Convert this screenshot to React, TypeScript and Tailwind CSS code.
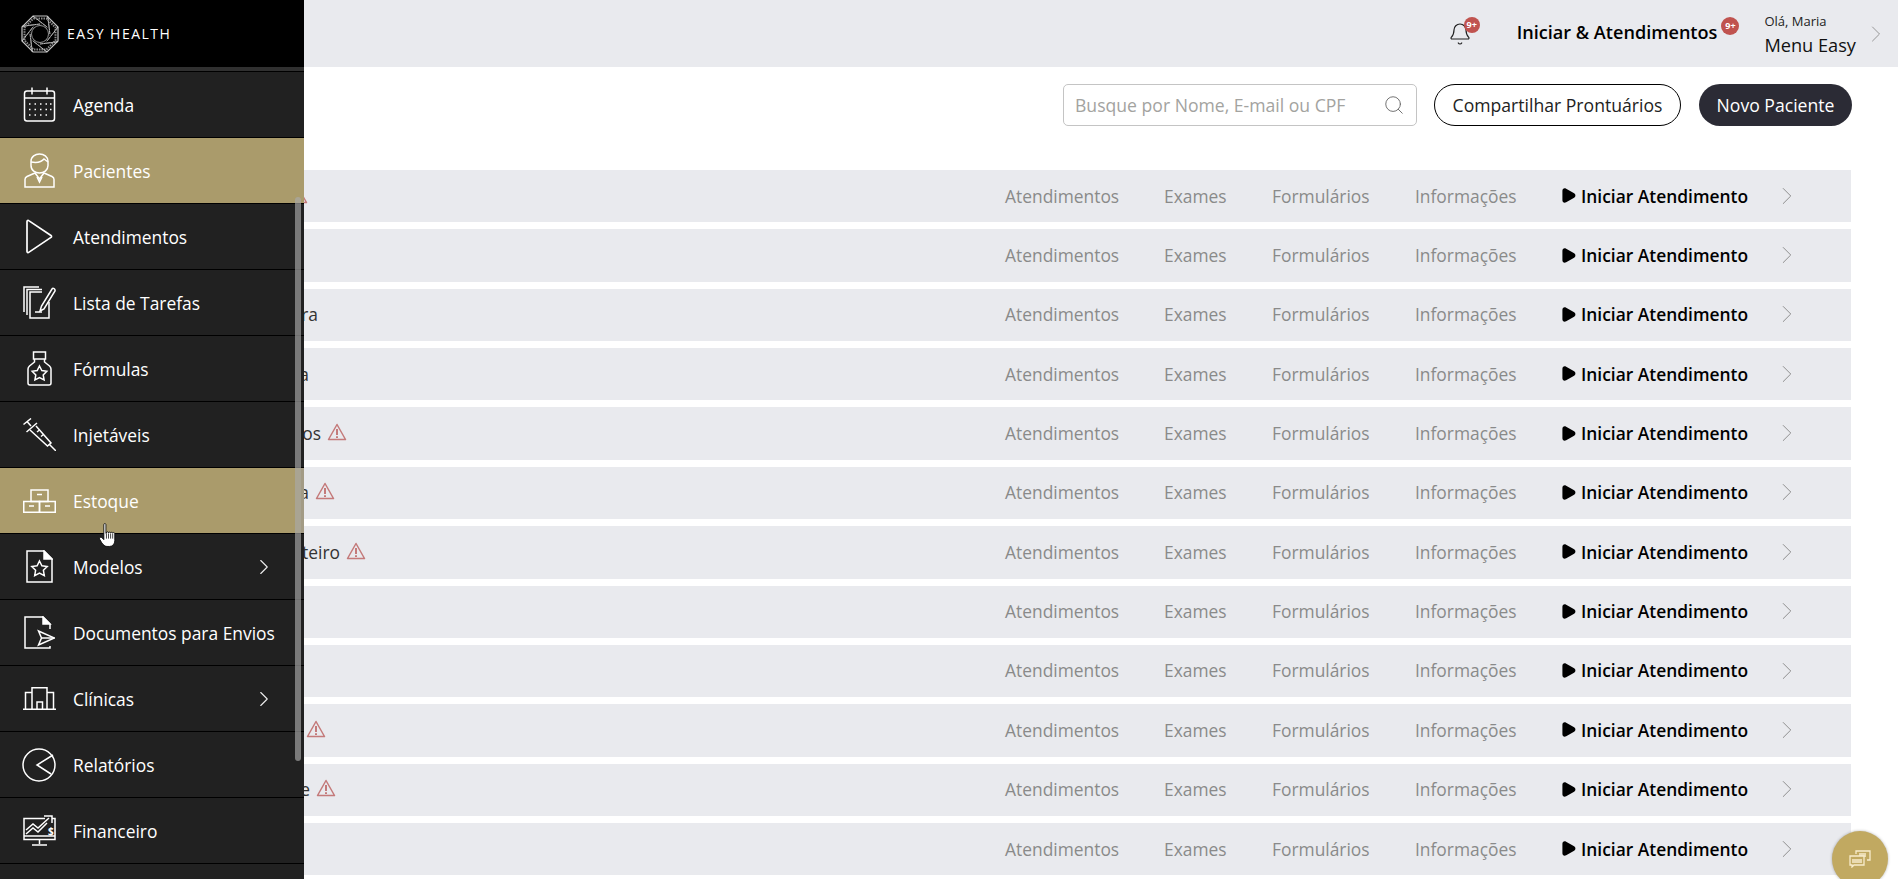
import React from "react";
import { Search, ChevronRight, Bell } from "lucide-react";

const font = { fontFamily: '"Open Sans", sans-serif' };

function CalendarIcon() {
  return (
    <svg width="33" height="35" viewBox="0 0 33 35" fill="none" stroke="currentColor" strokeWidth="1.5">
      <rect x="1.500" y="4" width="30" height="30" rx="2.500" />
      <path d="M1.500 11h30M9 .5v7M24 .5v7" />
      <path d="M6 17h1.500M11.500 17h1.500M17 17h1.500M22.500 17h1.500M27 17h1.500M6 22.500h1.500M11.500 22.500h1.500M17 22.500h1.500M22.500 22.500h1.500M27 22.500h1.500M6 28h1.500M11.500 28h1.500M17 28h1.500M22.500 28h1.500" strokeWidth="1.500" />
    </svg>
  );
}
function PersonIcon() {
  return (
    <svg width="31" height="35" viewBox="0 0 31 35" fill="none" stroke="currentColor" strokeWidth="1.5">
      <path d="M7 8.500c0-10 17-10 17 0v4c0 10-17 10-17 0z" />
      <path d="M7 9c6 1 11-.5 13-3l4 3" />
      <path d="M11 20l-8 3.500c-1.500.7-2 1.700-2 3V34h29v-7.500c0-1.300-.5-2.300-2-3L20 20l-4.500 6z" />
      <path d="M13 24l2.500 5 2.500-5" />
    </svg>
  );
}
function PlayIcon() {
  return (
    <svg width="28" height="35" viewBox="0 0 28 35" fill="none" stroke="currentColor" strokeWidth="1.7">
      <path d="M2 2.500c0-1 1-1.400 1.700-.9L26 16.500c.7.500.7 1.400 0 1.900L3.700 33.400c-.7.500-1.700.1-1.700-.9z" strokeLinejoin="round" />
    </svg>
  );
}
function TasksIcon() {
  return (
    <svg width="33" height="33" viewBox="0 0 33 33" fill="none" stroke="currentColor" strokeWidth="1.5">
      <path d="M1 26V1h15M4 29V3.500h15" />
      <path d="M19 6H7v26h19V16" />
      <path d="M17 25l1.500-5L29 3c1-1.500 3.500 0 3 2L21 23z" />
      <path d="M12 26h7" />
    </svg>
  );
}
function BottleIcon() {
  return (
    <svg width="25" height="35" viewBox="0 0 25 35" fill="none" stroke="currentColor" strokeWidth="1.5">
      <rect x="6.500" y="1" width="12" height="7" />
      <path d="M7.500 8v3l-5 4c-1 1-1.500 1.500-1.500 3v14c0 1.200.8 2 2 2h19c1.200 0 2-.8 2-2V18c0-1.500-.5-2-1.500-3l-5-4V8" />
      <path d="M12.500 15l2.300 4.600 5 .7-3.600 3.600.9 5-4.600-2.400-4.600 2.400.9-5-3.600-3.600 5-.7z" />
    </svg>
  );
}
function SyringeIcon() {
  return (
    <svg width="33" height="33" viewBox="0 0 33 33" fill="none" stroke="currentColor" strokeWidth="1.5">
      <path d="M.5 6.500L8 .5M4 3.500L8 8M3.500 14L14 5" />
      <path d="M13 8l15 17-3.500 3L7 12" />
      <path d="M26 26l7 7" />
      <path d="M14 14l2.500-2M18 18.500l2.500-2" />
    </svg>
  );
}
function BoxesIcon() {
  return (
    <svg width="33" height="24" viewBox="0 0 33 24" fill="none" stroke="currentColor" strokeWidth="1.5">
      <rect x="8" y="1" width="17" height="11.500" />
      <rect x=".75" y="12.500" width="15.750" height="10.750" />
      <rect x="16.500" y="12.500" width="15.750" height="10.750" />
      <path d="M14 5.500h5M6 17h5M22 17h5" />
    </svg>
  );
}
function StarDocIcon() {
  return (
    <svg width="27" height="33" viewBox="0 0 27 33" fill="none" stroke="currentColor" strokeWidth="1.5">
      <path d="M1 1h17l8 8v23H1z" />
      <path d="M18 1v8h8z" fill="currentColor" />
      <path d="M13.500 11l2.400 4.800 5.300.8-3.800 3.700.9 5.300-4.800-2.500-4.800 2.500.9-5.300-3.800-3.700 5.300-.8z" />
    </svg>
  );
}
function DocSendIcon() {
  return (
    <svg width="31" height="33" viewBox="0 0 31 33" fill="none" stroke="currentColor" strokeWidth="1.5">
      <path d="M26 13V8l-7-7H1v31h25v-2" />
      <path d="M19 1v7h7z" fill="currentColor" />
      <path d="M14.500 15l16 7-16 7 3-7z" />
      <path d="M17.500 22h13" />
    </svg>
  );
}
function ClinicIcon() {
  return (
    <svg width="33" height="23" viewBox="0 0 33 23" fill="none" stroke="currentColor" strokeWidth="1.5">
      <path d="M0 22.250h33M2.500 22V5.500H9M30.500 22V5.500H24" />
      <path d="M9 22V.75h15V22" />
      <path d="M14 22v-7h5.500v7" />
    </svg>
  );
}
function PieIcon() {
  return (
    <svg width="34" height="34" viewBox="0 0 34 34" fill="none" stroke="currentColor" strokeWidth="1.5">
      <circle cx="17" cy="17" r="16" />
      <path d="M31 7L15 17l14 9" />
    </svg>
  );
}
function FinanceIcon() {
  return (
    <svg width="33" height="31" viewBox="0 0 33 31" fill="none" stroke="currentColor" strokeWidth="1.5">
      <path d="M22 3.500H1v21h31v-21h-3" />
      <path d="M1 21h31M16.500 25v4M9 30h15" />
      <path d="M3 15l7-6 5 4L26 3M21 1h8v7" />
      <path d="M3 19l7-6 5 4 9-9" />
      <text x="25" y="19.500" fontSize="10" fontWeight="700" stroke="none" fill="currentColor" fontFamily="Open Sans">$</text>
    </svg>
  );
}
function LogoIcon() {
  const blades = [0, 45, 90, 135, 180, 225, 270, 315];
  return (
    <svg width="38" height="38" viewBox="0 0 38 38" fill="none">
      <path d="M12 1h14l11 11v14L26 37H12L1 26V12z" stroke="#c4c4c4" strokeWidth="1.200" />
      <path d="M12.500 3.500h13l9 9v13l-9 9h-13l-9-9v-13z" stroke="#8c8c8c" strokeWidth="2" strokeDasharray="1.500 1" />
      {blades.map((a) => (
        <g key={a} transform={"rotate(" + a + " 19 19)"}>
          <path d="M12 1L26 12" stroke="#d6d6d6" strokeWidth="1" />
          <path d="M15 3L27 13" stroke="#7c7c7c" strokeWidth="1" strokeDasharray="1.500 1" />
        </g>
      ))}
      <circle cx="19" cy="19" r="8.500" fill="#000" stroke="#b8b8b8" strokeWidth="0.800" />
    </svg>
  );
}
function Warn() {
  return (
    <svg width="20" height="18" viewBox="0 0 20 18" fill="none" className="shrink-0 -translate-y-px text-[#c47a7a]" stroke="currentColor" strokeWidth="1.500">
      <path d="M10 1.500L18.500 16.500H1.500z" strokeLinejoin="round" />
      <path d="M10 6v6M10 13.200v1.800" strokeWidth="2" />
    </svg>
  );
}
function BubbleIcon() {
  return (
    <svg width="22" height="18" viewBox="0 0 22 18" fill="none" stroke="#f8eccb" strokeWidth="1.300">
      <path d="M7 4V1h14v9h-3" />
      <path d="M10 4h7M10 6h7" />
      <path d="M1 6h14v9H5l-2 2v-2H1z" fill="#c1a961" />
      <path d="M3 10h10M3 12h10" />
    </svg>
  );
}
function HandCursor() {
  return (
    <svg width="20" height="25" viewBox="0 0 18 24" className="absolute left-[98px] top-[523px] z-30">
      <path
        d="M5 1.500c0-1.300 2-1.300 2 0V10l.5-.5c0-1.500 2-1.500 2 0 0-1 2-1 2 0 0-.8 2-.8 2 0 0-.5 2-.5 2 .5V17c0 3-2 5.500-5 5.500H8C6 22.500 4.500 21 3 19L1 15.500c-.8-1.400.8-2.500 2-1.500l2 2z"
        fill="#fff"
        stroke="#000"
        strokeWidth="0.800"
      />
      <path d="M7.500 10v5M9.500 10v5M11.500 10v5M13.500 10v5" stroke="#000" strokeWidth="0.700" />
    </svg>
  );
}

const menu = [
  { label: "Agenda", icon: <CalendarIcon /> },
  { label: "Pacientes", icon: <PersonIcon />, active: true },
  { label: "Atendimentos", icon: <PlayIcon /> },
  { label: "Lista de Tarefas", icon: <TasksIcon /> },
  { label: "Fórmulas", icon: <BottleIcon /> },
  { label: "Injetáveis", icon: <SyringeIcon /> },
  { label: "Estoque", icon: <BoxesIcon />, active: true, strip: true },
  { label: "Modelos", icon: <StarDocIcon />, arrow: true },
  { label: "Documentos para Envios", icon: <DocSendIcon /> },
  { label: "Clínicas", icon: <ClinicIcon />, arrow: true },
  { label: "Relatórios", icon: <PieIcon /> },
  { label: "Financeiro", icon: <FinanceIcon /> },
];

const rows = [
  { name: "", w: "w-[282px]", warn: true },
  { name: "", w: "w-[300px]" },
  { name: "ra", w: "w-[318px]" },
  { name: "a", w: "w-[309px]" },
  { name: "os", w: "w-[321px]", warn: true },
  { name: "a", w: "w-[309px]", warn: true },
  { name: "teiro", w: "w-[340px]", warn: true },
  { name: "", w: "w-[300px]" },
  { name: "", w: "w-[300px]" },
  { name: "", w: "w-[300px]", warn: true },
  { name: "e", w: "w-[310px]", warn: true },
  { name: "", w: "w-[300px]" },
];

function Sidebar() {
  return (
    <aside className="absolute left-0 top-0 z-10 flex h-[879px] w-[304px] flex-col overflow-hidden bg-[#212121] text-white">
      <div className="flex h-[67px] shrink-0 items-center gap-[8px] bg-black pl-[21px]">
        <LogoIcon />
        <span className="text-[14px] tracking-[0.105em] text-white">EASY HEALTH</span>
      </div>
      <div className="h-[4px] shrink-0 bg-[#303030]" />
      <div className="h-px shrink-0 bg-black" />
      <nav className="flex flex-col">
        {menu.map((m) => (
          <div
            key={m.label}
            className={
              m.active
                ? "relative flex h-[66px] shrink-0 items-center border-b border-black bg-[#aa9b6b]"
                : "relative flex h-[66px] shrink-0 items-center border-b border-black"
            }
          >
            <div className="flex w-[73px] shrink-0 justify-center pl-[5px]">{m.icon}</div>
            <span className="translate-y-px text-[17.4px]">{m.label}</span>
            {m.arrow && <ChevronRight className="ml-auto mr-[27px] text-[#eeeeee]" size={26} strokeWidth={1} />}
            {m.strip && <div className="absolute right-0 top-0 h-full w-[3px] bg-[#a39b85]" />}
          </div>
        ))}
      </nav>
      <div className="absolute left-[295px] top-[197px] h-[564px] w-[6px] rounded-full bg-[#a8a8a8]/[0.66]" />
    </aside>
  );
}

function Row({ r }: { r: (typeof rows)[number] }) {
  return (
    <div className="mb-[7px] flex h-[52.36px] w-[1851px] shrink-0 items-center bg-[#e9eaee] pb-[1px] text-[17.4px]">
      <div className={r.w + " shrink-0 text-right text-[#333333]"}>{r.name}</div>
      {r.warn && <div className="ml-[6px]"><Warn /></div>}
      <div className="ml-auto flex items-center text-[#8a8a8a]">
        <span className="w-[159px]">Atendimentos</span>
        <span className="w-[108px]">Exames</span>
        <span className="w-[143px]">Formulários</span>
        <span className="w-[146px]">Informações</span>
        <svg width="15" height="15" viewBox="0 0 15 16" className="mr-[5px] text-black" fill="currentColor">
          <path d="M1 3C1 .6 3 -.3 5 .8l8.500 4.800c1.800 1 1.800 3.800 0 4.800L5 15.200C3 16.300 1 15.400 1 13z" />
        </svg>
        <span className="w-[191px] font-semibold text-black">Iniciar Atendimento</span>
        <ChevronRight className="mr-[49px] text-[#8f8f8f]" size={30} strokeWidth={0.8} />
      </div>
    </div>
  );
}

export default function App() {
  return (
    <div className="relative h-[879px] w-[1898px] overflow-hidden bg-white" style={font}>
      <Sidebar />
      <HandCursor />
      <header className="flex h-[67px] items-center justify-end bg-[#e9eaee]">
        <div className="relative mr-[45px]">
          <Bell size={24} strokeWidth={1.2} className="text-[#222222]" />
          <span className="absolute -right-[8px] -top-[5px] flex h-[16px] w-[16px] items-center justify-center rounded-full bg-[#c0534f] text-[9px] font-bold text-white">9+</span>
        </div>
        <div className="relative mr-[47px] -translate-y-px text-[18.1px] font-semibold text-black">
          Iniciar &amp; Atendimentos
          <span className="absolute -right-[22px] -top-[2px] flex h-[18px] w-[18px] items-center justify-center rounded-full bg-[#c0534f] text-[9px] font-bold text-white">9+</span>
        </div>
        <div className="flex flex-col">
          <span className="text-[13px] leading-[18px] text-[#222222]">Olá, Maria</span>
          <span className="translate-y-[2px] text-[18.2px] leading-[26px] text-[#111111]">Menu Easy</span>
        </div>
        <ChevronRight className="ml-[6px] mr-[8px] text-[#8f8f8f]" size={28} strokeWidth={0.8} />
      </header>
      <div className="flex h-[103px] items-start justify-end pr-[46px] pt-[17px]">
        <div className="flex h-[42px] w-[354px] items-center justify-between rounded-[5px] border border-[#c4c4c4] pl-[11px] pr-[11px]">
          <span className="text-[17.6px] text-[#a3a3a0]">Busque por Nome, E-mail ou CPF</span>
          <Search size={22} strokeWidth={1} className="text-[#666666]" />
        </div>
        <div className="ml-[17px] flex h-[42px] w-[247px] items-center justify-center rounded-full border border-black text-[17.6px] text-[#222222]">Compartilhar Prontuários</div>
        <div className="ml-[18px] flex h-[42px] w-[153px] items-center justify-center rounded-full bg-[#2b2b35] text-[17.6px] text-white">Novo Paciente</div>
      </div>
      <main className="flex flex-col">
        {rows.map((r, i) => (
          <Row key={i} r={r} />
        ))}
      </main>
      <div className="absolute left-[1832px] top-[831px] z-20 flex h-[56px] w-[56px] items-center justify-center rounded-full bg-[#c1a961] shadow-[0_0_3px_rgba(0,0,0,0.3)]">
        <BubbleIcon />
      </div>
    </div>
  );
}
